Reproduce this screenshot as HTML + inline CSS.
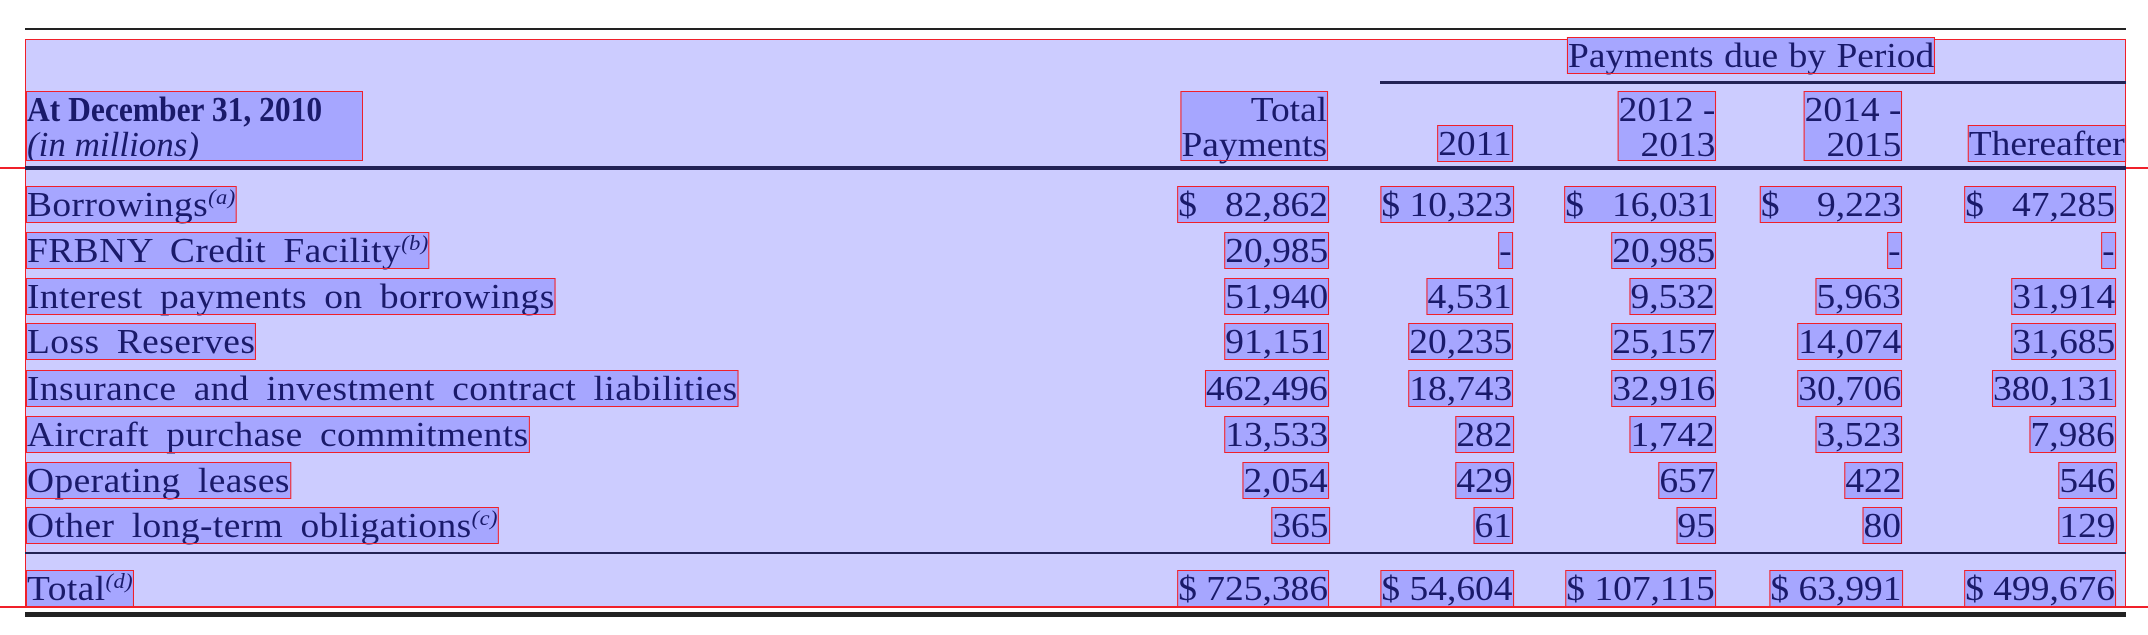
<!DOCTYPE html>
<html><head><meta charset="utf-8"><style>
body{margin:0;width:2148px;height:635px;background:#fff;position:relative;overflow:hidden;font-family:"Liberation Serif",serif;color:#1a1a6a}
.a{position:absolute}
.t{position:absolute;font-size:35px;line-height:35px;height:35px;background:#a6a6ff;outline:1.5px solid #f0202a;white-space:nowrap;transform:scaleX(1.07)}
.l{transform-origin:left center;word-spacing:7px;letter-spacing:0.4px}
.r{transform-origin:right center}
sup{font-size:21px;font-style:italic;vertical-align:top;line-height:20px}
</style></head><body>
<div class="a" style="left:25px;top:28px;width:2101px;height:2px;background:#222"></div>
<div class="a" style="left:26px;top:40px;width:2099px;height:567px;background:#ccccff;outline:1.5px solid #f0202a"></div>
<div class="a" style="left:0;top:167px;width:2148px;height:1.5px;background:#f0202a"></div>
<div class="a" style="left:25px;top:166px;width:2101px;height:4px;background:#222255"></div>
<div class="a" style="left:1380px;top:81px;width:746px;height:3px;background:#222255"></div>
<div class="a" style="left:25px;top:552px;width:2101px;height:2px;background:#222255"></div>
<div class="a" style="left:0;top:606px;width:2148px;height:1.5px;background:#f0202a"></div>
<div class="a" style="left:25px;top:612px;width:2101px;height:5px;background:#222"></div>

<div class="t l" style="left:1568px;top:38px;word-spacing:1px;letter-spacing:0">Payments due by Period</div>
<div class="t l" style="left:27px;top:92px;height:68px;font-weight:bold;width:335px;word-spacing:0;letter-spacing:0;transform:scaleX(1.0);overflow:hidden"><span style="display:inline-block;transform:scaleX(0.9);transform-origin:left">At December 31, 2010</span><br><i style="font-weight:normal">(in millions)</i></div>
<div class="t r" style="right:821px;top:92px;height:68px;text-align:right">Total<br>Payments</div>
<div class="t r" style="right:636px;top:126px">2011</div>
<div class="t r" style="right:433px;top:92px;height:68px;text-align:right">2012 -<br>2013</div>
<div class="t r" style="right:247px;top:92px;height:68px;text-align:right">2014 -<br>2015</div>
<div class="t r" style="right:23px;top:126px">Thereafter</div>

<div class="t l" style="left:27px;top:187px">Borrowings<sup>(a)</sup></div>
<div class="t l" style="left:27px;top:233px">FRBNY Credit Facility<sup>(b)</sup></div>
<div class="t l" style="left:27px;top:279px">Interest payments on borrowings</div>
<div class="t l" style="left:27px;top:324px">Loss Reserves</div>
<div class="t l" style="left:27px;top:371px">Insurance and investment contract liabilities</div>
<div class="t l" style="left:27px;top:417px">Aircraft purchase commitments</div>
<div class="t l" style="left:27px;top:463px">Operating leases</div>
<div class="t l" style="left:27px;top:508px">Other long-term obligations<sup>(c)</sup></div>
<div class="t l" style="left:27px;top:571px">Total<sup>(d)</sup></div>

<div class="t r" style="right:820px;top:187px">$&nbsp;&nbsp;&nbsp;82,862</div>
<div class="t r" style="right:636px;top:187px">$ 10,323</div>
<div class="t r" style="right:433px;top:187px">$&nbsp;&nbsp;&nbsp;16,031</div>
<div class="t r" style="right:247px;top:187px">$&nbsp;&nbsp;&nbsp;&nbsp;9,223</div>
<div class="t r" style="right:33px;top:187px">$&nbsp;&nbsp;&nbsp;47,285</div>

<div class="t r" style="right:820px;top:233px">20,985</div>
<div class="t r" style="right:636px;top:233px">-</div>
<div class="t r" style="right:433px;top:233px">20,985</div>
<div class="t r" style="right:247px;top:233px">-</div>
<div class="t r" style="right:33px;top:233px">-</div>

<div class="t r" style="right:820px;top:279px">51,940</div>
<div class="t r" style="right:636px;top:279px">4,531</div>
<div class="t r" style="right:433px;top:279px">9,532</div>
<div class="t r" style="right:247px;top:279px">5,963</div>
<div class="t r" style="right:33px;top:279px">31,914</div>

<div class="t r" style="right:820px;top:324px">91,151</div>
<div class="t r" style="right:636px;top:324px">20,235</div>
<div class="t r" style="right:433px;top:324px">25,157</div>
<div class="t r" style="right:247px;top:324px">14,074</div>
<div class="t r" style="right:33px;top:324px">31,685</div>

<div class="t r" style="right:820px;top:371px">462,496</div>
<div class="t r" style="right:636px;top:371px">18,743</div>
<div class="t r" style="right:433px;top:371px">32,916</div>
<div class="t r" style="right:247px;top:371px">30,706</div>
<div class="t r" style="right:33px;top:371px">380,131</div>

<div class="t r" style="right:820px;top:417px">13,533</div>
<div class="t r" style="right:636px;top:417px">282</div>
<div class="t r" style="right:433px;top:417px">1,742</div>
<div class="t r" style="right:247px;top:417px">3,523</div>
<div class="t r" style="right:33px;top:417px">7,986</div>

<div class="t r" style="right:820px;top:463px">2,054</div>
<div class="t r" style="right:636px;top:463px">429</div>
<div class="t r" style="right:433px;top:463px">657</div>
<div class="t r" style="right:247px;top:463px">422</div>
<div class="t r" style="right:33px;top:463px">546</div>

<div class="t r" style="right:820px;top:508px">365</div>
<div class="t r" style="right:636px;top:508px">61</div>
<div class="t r" style="right:433px;top:508px">95</div>
<div class="t r" style="right:247px;top:508px">80</div>
<div class="t r" style="right:33px;top:508px">129</div>

<div class="t r" style="right:820px;top:571px">$ 725,386</div>
<div class="t r" style="right:636px;top:571px">$ 54,604</div>
<div class="t r" style="right:433px;top:571px">$ 107,115</div>
<div class="t r" style="right:247px;top:571px">$ 63,991</div>
<div class="t r" style="right:33px;top:571px">$ 499,676</div>
</body></html>
